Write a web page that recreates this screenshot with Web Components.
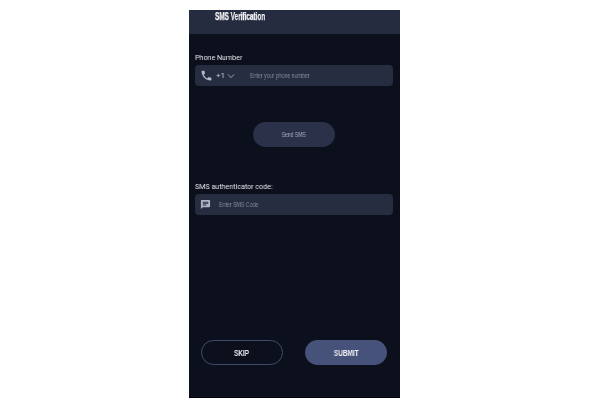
<!DOCTYPE html>
<html>
<head>
<meta charset="utf-8">
<style>
  html, body { margin: 0; padding: 0; background: #fff; }
  body { width: 600px; height: 409px; overflow: hidden; font-family: Roboto, sans-serif; }
</style>
</head>
<body>
<sms-screen>
  <sms-header slot="header">SMS Verification</sms-header>

  <sms-field slot="phone" label="Phone Number" placeholder="Enter your phone number" gap="15">
    <svg slot="icon" width="13" height="13" viewBox="0 0 24 24" fill="#b4bacb"><path d="M6.600 10.800c1.400 2.800 3.800 5.100 6.600 6.600l2.200-2.200c.3-.3.7-.4 1-.2 1.100.4 2.300.6 3.600.6.600 0 1 .4 1 1V20c0 .6-.4 1-1 1C10.600 21 3 13.400 3 4c0-.6.4-1 1-1h3.500c.6 0 1 .4 1 1 0 1.300.2 2.500.6 3.600.1.300 0 .7-.2 1z"/></svg>
    <span slot="prefix" class="code">+1
      <svg width="8" height="8" viewBox="0 0 24 24" fill="none" stroke="#b4bacb" stroke-width="2.400"><path d="M3 7l9 10 9-10"/></svg>
    </span>
  </sms-field>

  <sms-button slot="send" variant="send">Send SMS</sms-button>

  <sms-field slot="code" label="SMS authenticator code:" placeholder="Enter SMS Code" gap="8">
    <svg slot="icon" width="11" height="11" viewBox="0 0 24 24" fill="#aeb4c6"><path d="M20 2H4c-1.100 0-2 .9-2 2v18l4-4h14c1.100 0 2-.9 2-2V4c0-1.100-.9-2-2-2zM6 9h12v2H6zm8 5H6v-2h8zm4-6H6V6h12z"/></svg>
  </sms-field>

  <sms-button slot="skip" variant="outline">SKIP</sms-button>
  <sms-button slot="submit" variant="solid">SUBMIT</sms-button>
</sms-screen>

<script>
const NARROW = '"Liberation Sans", sans-serif';

class SmsScreen extends HTMLElement {
  constructor() {
    super();
    const shadow = this.attachShadow({ mode: 'open' });
    shadow.innerHTML = `<style>
      :host { display: flex; flex-direction: column; width: 211px; height: 388px; margin: 10px 0 0 189px;
        background: #0c0f1c; border-bottom: 1px solid #000; box-sizing: border-box; }
      .form { display: flex; flex-direction: column; padding: 18px 7px 0 6px; }
      .send { display: flex; justify-content: center; margin: 36px 0 34px; }
      .actions { display: flex; justify-content: space-between; padding: 0 13px 0 12px; margin-top: 125px; }
    </style>
    <slot name="header"></slot>
    <div class="form">
      <slot name="phone"></slot>
      <div class="send"><slot name="send"></slot></div>
      <slot name="code"></slot>
    </div>
    <div class="actions">
      <slot name="skip"></slot>
      <slot name="submit"></slot>
    </div>`;
  }
}

class SmsHeader extends HTMLElement {
  constructor() {
    super();
    const shadow = this.attachShadow({ mode: 'open' });
    shadow.innerHTML = `<style>
      :host { display: block; height: 24px; box-sizing: border-box; padding: 1px 0 0 26px; background: #262c40;
        color: #f2f3f6; font: bold 10px/12px ${NARROW}; }
      span { display: inline-block; transform: scaleX(.64); transform-origin: left; white-space: nowrap; will-change: transform;
        -webkit-text-stroke: .25px #f2f3f6; }
    </style><span><slot></slot></span>`;
  }
}

class SmsField extends HTMLElement {
  constructor() {
    super();
    const shadow = this.attachShadow({ mode: 'open' });
    const gap = this.getAttribute('gap') || 10;
    shadow.innerHTML = `<style>
      :host { display: block; }
      .label { height: 13px; font: 8px/12px Roboto, sans-serif; color: #e4e6ec; white-space: nowrap;
        transform: scaleX(.89); transform-origin: left; will-change: transform; }
      .box { display: flex; align-items: center; height: 21px; padding-left: 5px; border-radius: 4px; background: #272d41; }
      .icon { display: flex; }
      ::slotted(.code) { display: flex; align-items: center; gap: 2px; margin-left: 3px;
        font: 8px Roboto, sans-serif; color: #c3c8d6; }
      .hint { margin-left: ${gap}px; font: 7.5px ${NARROW}; color: #868c9f; transform: scaleX(.7); transform-origin: left;
        white-space: nowrap; will-change: transform; }
    </style>
    <div class="label">${this.getAttribute('label')}</div>
    <div class="box">
      <span class="icon"><slot name="icon"></slot></span>
      <slot name="prefix"></slot>
      <span class="hint">${this.getAttribute('placeholder')}</span>
    </div>`;
  }
}

class SmsButton extends HTMLElement {
  constructor() {
    super();
    const shadow = this.attachShadow({ mode: 'open' });
    shadow.innerHTML = `<style>
      :host { display: flex; align-items: center; justify-content: center; width: 82px; height: 25px; border-radius: 13px;
        box-sizing: border-box; font-family: ${NARROW}; }
      :host([variant=send]) { background: #2a3148; color: #aab0c2; font-size: 7px; }
      :host([variant=outline]) { border: 1px solid #414c6c; color: #eceef3; font-size: 9px; font-weight: bold; }
      :host([variant=solid]) { background: #47527a; color: #eceef3; font-size: 9px; font-weight: bold; }
      span { display: inline-block; transform: scaleX(.72); white-space: nowrap; will-change: transform; }
    </style><span><slot></slot></span>`;
  }
}

customElements.define('sms-screen', SmsScreen);
customElements.define('sms-header', SmsHeader);
customElements.define('sms-field', SmsField);
customElements.define('sms-button', SmsButton);
</script>
</body>
</html>
